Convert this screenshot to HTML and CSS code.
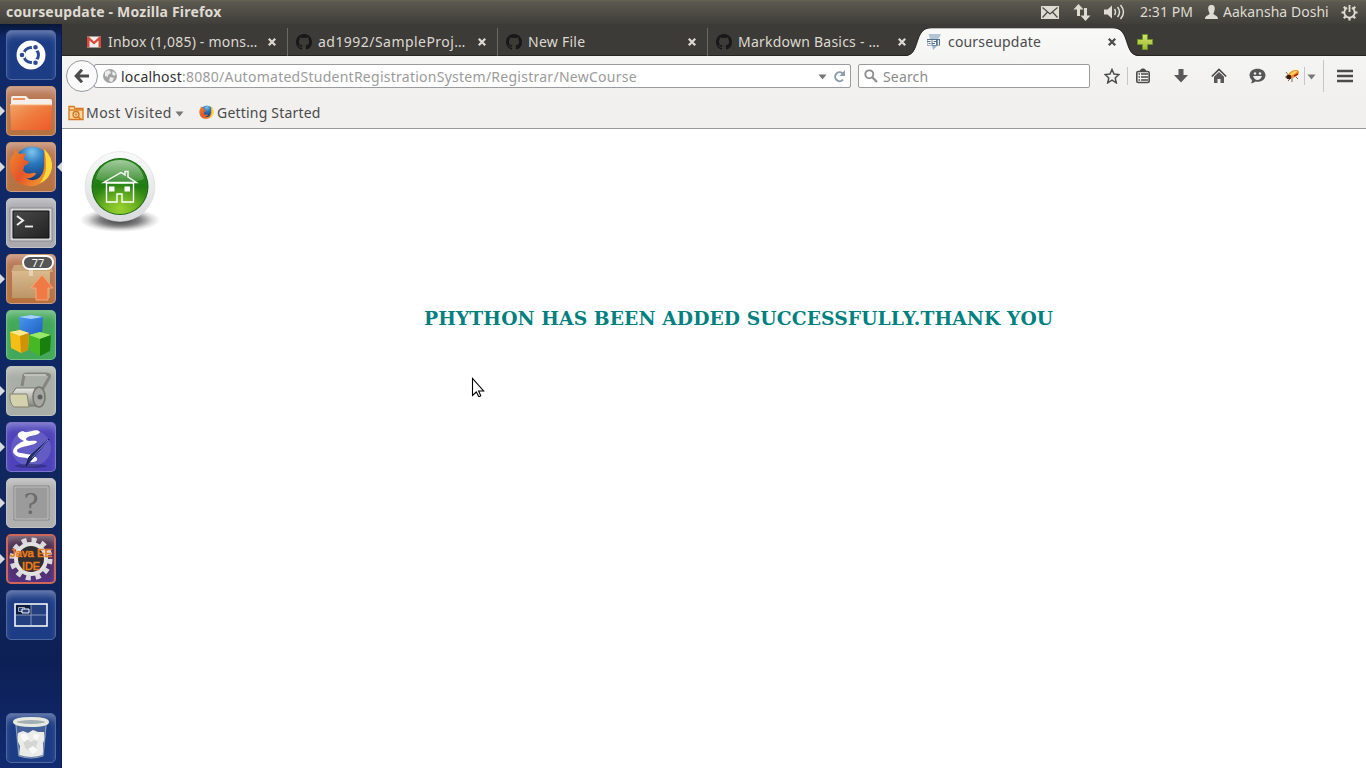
FILE: index.html
```
<!DOCTYPE html>
<html lang="en">
<head>
<meta charset="utf-8">
<title>courseupdate - Mozilla Firefox</title>
<link rel="stylesheet" href="styles.css">
</head>
<body>
<svg class="defs" width="0" height="0">
  <defs>
    <linearGradient id="folder" x1="0" y1="0" x2="1" y2="1"><stop offset="0" stop-color="#f0a468"/><stop offset=".5" stop-color="#ee7a3c"/><stop offset="1" stop-color="#ee5a2a"/></linearGradient>
    <radialGradient id="globe" cx=".5" cy=".15" r=".8"><stop offset="0" stop-color="#7cc4ee"/><stop offset=".4" stop-color="#2a78bd"/><stop offset="1" stop-color="#103572"/></radialGradient>
    <linearGradient id="fox" x1="0" y1="0" x2="1" y2=".6"><stop offset="0" stop-color="#f38a2c"/><stop offset=".5" stop-color="#e4552a"/><stop offset="1" stop-color="#f39a2c"/></linearGradient>
    <linearGradient id="box" x1="0" y1="0" x2="0" y2="1"><stop offset="0" stop-color="#d9ba8e"/><stop offset="1" stop-color="#bb9666"/></linearGradient>
    <linearGradient id="screen" x1="0" y1="0" x2="1" y2="1"><stop offset="0" stop-color="#4a4a4a"/><stop offset="1" stop-color="#222"/></linearGradient>
    <linearGradient id="metal" x1="0" y1="0" x2="0" y2="1"><stop offset="0" stop-color="#e8e9e4"/><stop offset="1" stop-color="#85877e"/></linearGradient>
    <linearGradient id="blueface" x1="0" y1="0" x2="1" y2="1"><stop offset="0" stop-color="#4a9af0"/><stop offset="1" stop-color="#1a5cc0"/></linearGradient>
    <linearGradient id="orb" x1="0" y1="0" x2="0" y2="1"><stop offset="0" stop-color="#2d8a22"/><stop offset=".5" stop-color="#1f7d12"/><stop offset="1" stop-color="#5fa81e"/></linearGradient>
    <radialGradient id="orbglow" cx=".5" cy=".9" r=".5"><stop offset="0" stop-color="#98d02f"/><stop offset="1" stop-color="#98d02f" stop-opacity="0"/></radialGradient>
    <linearGradient id="orbshine" x1="0" y1="0" x2="0" y2="1"><stop offset="0" stop-color="#fff" stop-opacity=".55"/><stop offset="1" stop-color="#fff" stop-opacity=".12"/></linearGradient>
    <linearGradient id="ring" x1="0" y1="0" x2="0" y2="1"><stop offset="0" stop-color="#fafafb"/><stop offset="1" stop-color="#d9dadd"/></linearGradient>
    <radialGradient id="shade"><stop offset="0" stop-color="#000" stop-opacity=".8"/><stop offset=".5" stop-color="#000" stop-opacity=".5"/><stop offset=".8" stop-color="#000" stop-opacity=".14"/><stop offset="1" stop-color="#000" stop-opacity="0"/></radialGradient>
    <linearGradient id="tabfill" x1="0" y1="0" x2="0" y2="1"><stop offset="0" stop-color="#f9f9f8"/><stop offset="1" stop-color="#f5f5f4"/></linearGradient>
    <linearGradient id="plus" x1="0" y1="0" x2="0" y2="1"><stop offset="0" stop-color="#d3e46d"/><stop offset="1" stop-color="#9dbb2c"/></linearGradient>
    <symbol id="github" viewBox="0 0 16 16"><path fill="#191717" d="M8 0C3.58 0 0 3.58 0 8c0 3.54 2.29 6.53 5.47 7.59.4.07.55-.17.55-.38 0-.19-.01-.82-.01-1.49-2.01.37-2.53-.49-2.69-.94-.09-.23-.48-.94-.82-1.13-.28-.15-.68-.52-.01-.53.63-.01 1.08.58 1.23.82.72 1.21 1.87.87 2.33.66.07-.52.28-.87.51-1.07-1.78-.2-3.64-.89-3.64-3.95 0-.87.31-1.59.82-2.15-.08-.2-.36-1.02.08-2.12 0 0 .67-.21 2.2.82.64-.18 1.32-.27 2-.27s1.36.09 2 .27c1.53-1.04 2.2-.82 2.2-.82.44 1.1.16 1.92.08 2.12.51.56.82 1.27.82 2.15 0 3.07-1.87 3.75-3.65 3.95.29.25.54.73.54 1.48 0 1.07-.01 1.93-.01 2.2 0 .21.15.46.55.38A8.01 8.01 0 0 0 16 8c0-4.42-3.58-8-8-8z"/></symbol>
    <symbol id="close" viewBox="0 0 10 10"><path d="M1.800 1.800 8.200 8.200M8.200 1.800 1.800 8.200" stroke="currentColor" stroke-width="2.300"/></symbol>
    <symbol id="firefox" viewBox="0 0 44 44">
      <circle cx="23" cy="20" r="18.500" fill="url(#globe)"/>
      <path d="M35 5q4 4 5 9l2 2q2 14-8 21-12 8-24 1Q0 31 1 18q0-5 4-9 0-3 1-5 2 4 5 5 3-1 6 0-2 3-2 5 1 2 5 2-1 4-5 5 0 3-1 4 3 5 9 3 4-1 4 1-4 5-10 4 8 5 14-1 5-6 4-15z" fill="url(#fox)"/>
      <path d="M35 4q9 8 8 19-2 11-12 15 6-8 6-16 0-10-2-18z" fill="#fbd93a"/>
    </symbol>
  </defs>
</svg>

<header class="panel">
  <span class="panel-title">courseupdate - Mozilla Firefox</span>
  <div class="indicators">
    <svg class="i-mail" width="18" height="13" viewBox="0 0 18 13"><path d="M0 0h18v13H0z" fill="#dfdbd2"/><path d="M1.500 1.500 9 8l7.500-6.500M1.500 11.500 6.500 6M16.500 11.500l-5-5.500" fill="none" stroke="#4b4a45" stroke-width="1.200"/></svg>
    <svg class="i-net" width="18" height="17" viewBox="0 0 18 17"><path d="M5.500 0 10.500 5.500H7V12H4V5.500H.500zM12.500 17 7.500 11.500H11V4h3v7.500h3.500z" fill="#dfdbd2"/></svg>
    <svg class="i-vol" width="21" height="16" viewBox="0 0 21 16"><path d="M0 5.500h3.500L8 1.500v13L3.500 10.500H0z" fill="#dfdbd2"/><path d="M10.500 5q2 3 0 6M13.500 3q4 5 0 10M16.500 1q6 7 0 14" fill="none" stroke="#dfdbd2" stroke-width="1.500"/></svg>
    <span class="clock">2:31 PM</span>
    <svg class="i-user" width="13" height="14" viewBox="0 0 13 14"><path d="M6.500 0C9.300 0 10 2 9.700 4.500 9.400 7 8.400 7.600 8.400 8.800c0 1.400 4.600 1.400 4.600 5.200H0c0-3.800 4.600-3.800 4.600-5.200C4.600 7.600 3.600 7 3.300 4.500 3 2 3.700 0 6.500 0z" fill="#dfdbd2"/></svg>
    <span class="user">Aakansha Doshi</span>
    <svg class="i-gear" width="17" height="17" viewBox="0 0 17 17" fill="none" stroke="#dfdbd2"><path d="M6.200 3.700a5.200 5.200 0 1 0 4.600 0" stroke-width="1.800"/><path d="M8.500 1v7" stroke-width="1.800"/><path d="M8.500 14v2.500M.500 8.500H3M14 8.500h2.500M2.800 2.800l1.800 1.800M14.200 2.800l-1.800 1.800M2.800 14.200l1.800-1.800M14.200 14.200l-1.800-1.800" stroke-width="2.200"/></svg>
  </div>
</header>

<div class="desktop">
  <nav class="launcher">
    <div class="tile tile-dash"><svg viewBox="0 0 50 50"><circle cx="25" cy="25" r="14.500" fill="#fff"/><circle cx="25" cy="25" r="7.500" fill="none" stroke="#2b4a92" stroke-width="3"/><g fill="#2b4a92" stroke="#fff" stroke-width="1.400"><circle cx="16" cy="25" r="3"/><circle cx="29.500" cy="17.200" r="3"/><circle cx="29.500" cy="32.800" r="3"/></g></svg></div>
    <div class="tile tile-brown running"><svg viewBox="0 0 50 50"><path d="M5 12q0-2 2-2h13l3 3h21q2 0 2 2v6H5z" fill="#f5efec"/><path d="M7 12h12v2H7z" fill="#f0905a"/><path d="M4 18h42l-1 26H5z" fill="url(#folder)"/><path d="M4 18h42v1.200H4z" fill="#ffd0ad"/></svg></div>
    <div class="tile tile-brown running focused"><svg viewBox="0 0 50 50"><use href="#firefox" x="3" y="3" width="44" height="44"/></svg></div>
    <div class="tile tile-grey"><svg viewBox="0 0 50 50"><path d="M4 10h42v33H4z" fill="#d5d5d7" stroke="#8a8a8e"/><path d="M7 13h36v27H7z" fill="url(#screen)" stroke="#111"/><path d="m11 18 6 4.500-6 4.500" fill="none" stroke="#eee" stroke-width="2"/><path d="M19 28.500h8" stroke="#eee" stroke-width="1.800"/></svg></div>
    <div class="tile tile-brown running"><svg viewBox="0 0 50 50"><path d="m8 11 37-1 2 8H5z" fill="#c7a577"/><path d="M6 17h38v27H6z" fill="url(#box)"/><path d="M23 14h4v8h-4z" fill="#ead9bd" opacity=".8"/><path d="m36 21 11 13h-5v12H30V34h-5z" fill="#ef7a45" stroke="#f9a57c"/></svg><span class="badge">77</span></div>
    <div class="tile tile-green"><svg viewBox="0 0 50 50"><path d="m13 7 12-2 12 2-1 17-11 3-11-3z" fill="url(#blueface)"/><path d="m13 7 12-2 12 2-12 2z" fill="#a5d2fb"/><path d="m4 22 10-2 9 3-1 17-7 3-10-5z" fill="#f5bd16"/><path d="m4 22 10-2 9 3-9 3z" fill="#fde98b"/><path d="m14 26 9-3-1 17-7 3z" fill="#cf930a"/><path d="m23 25 11-3 11 3-1 16-10 5-11-6z" fill="#45b824"/><path d="m23 25 11-3 11 3-11 4z" fill="#9ae868"/><path d="m34 29 11-4-1 16-10 5z" fill="#198010"/></svg></div>
    <div class="tile tile-stone running"><svg viewBox="0 0 50 50"><path d="M16 20 18 9q1-1 4-1h18q5 0 3 4l-7 12" fill="none" stroke="#85877f" stroke-width="3"/><path d="M18 9h22" stroke="#cfd0ca" stroke-width="1.500"/><path d="M10 22h24v18H8q-6-9 2-18z" fill="url(#metal)" stroke="#73756c"/><path d="M4 28h17l2 13H8q-5-4-4-13z" fill="#d4d2ac" stroke="#828271"/><ellipse cx="33" cy="31" rx="6" ry="10" fill="#a6a7a2" stroke="#73756c" stroke-width="1.500"/><circle cx="34" cy="31" r="2.500" fill="#5e605b"/></svg></div>
    <div class="tile tile-purple running"><svg viewBox="0 0 50 50"><ellipse cx="25" cy="26" rx="20" ry="18.500" fill="#8d8dd8" opacity=".35"/><ellipse cx="25" cy="44" rx="16" ry="2" fill="#23235f" opacity=".5"/><path d="M17 9c4 4 13-4 17 1-1 4-13 3-14 7 0 4 10 0 11 3-2 4-20 4-20 9 0 3 12 2 17 5 6 3 3 7-5 6 7-4-5-4-10-5-13-5-1-14 5-16-10-5-6-9-1-10z" fill="#fff"/><path d="M43 17 27 36l-7 8 3-9z" fill="#24306f" stroke="#131a48"/><path d="m42 18-16 18" stroke="#6e83cf"/></svg></div>
    <div class="tile tile-grey tile-unknown running"><svg viewBox="0 0 50 50"><path d="M8 8h35v34H8z" fill="#9b9b9b" stroke="#858585"/><path d="M9 9h33v32H9z" fill="none" stroke="#bdbdbd"/><text x="25" y="36" class="question">?</text></svg></div>
    <div class="tile tile-java running"><svg viewBox="0 0 50 50"><circle cx="25" cy="25" r="19" fill="none" stroke="#d9d9d9" stroke-width="5" stroke-dasharray="5 4.950"/><circle cx="25" cy="25" r="15" fill="#322d30" stroke="#e1e1e1" stroke-width="4"/><text x="25" y="22.500" textLength="42" lengthAdjust="spacingAndGlyphs" class="java">Java EE</text><text x="25" y="35.500" textLength="18" lengthAdjust="spacingAndGlyphs" class="java">IDE</text></svg></div>
    <div class="tile tile-blue"><svg viewBox="0 0 50 50"><path d="M9 14h32v22H9z" fill="#24407f" stroke="#fff" stroke-width="1.500"/><path d="M10 15h15v10H10z" fill="#0b193f"/><path d="M25 15v20M10 25h30" stroke="#8898bd"/><path d="M12.500 17.500h6v4h-6z" fill="#24407f" stroke="#aaa"/><path d="M16 19h7v4h-7z" fill="#24407f" stroke="#fff"/></svg></div>
    <div class="tile tile-blue tile-trash"><svg viewBox="0 0 50 50"><path d="m9 9 3 34q13 5 26 0l3-34z" fill="#a5bad0" opacity=".3"/><path d="m12 20 5-2 5 2 5-3 5 2 6 0 1 7-2 4 0 12q-12 4-24 0l1-9-3-6z" fill="#ebebea"/><path d="m17 27 4-2 3 4 5-2 3 2-2 4 1 4-4-2-4 3-4-3z" fill="#d5d6d4"/><path d="m15 21 5 0 3 5-5 3-3-4zM28 21l6 1-3 5-4-2zM22 36l5-3 5 4-5 4z" fill="#f9f9f9"/><path d="m10 12 3 31q12 4 24 0l3-31" fill="none" stroke="#8d9fb5"/><ellipse cx="25" cy="9" rx="16.500" ry="3.500" fill="#a3aeb5" stroke="#e7ebdf" stroke-width="3"/></svg></div>
  </nav>

  <div class="browser">
    <div class="tabs">
      <div class="tab"><svg class="favicon" viewBox="0 0 16 16"><path d="M1 2.500h14v11H1z" fill="#f3eeee"/><path d="M1 13.500v-11h1.500L8 7.500l5.500-5H15v11h-2.500V6.500L8 10.500l-4.500-4v7z" fill="#d54b3d"/></svg><span class="label l-inbox">Inbox (1,085) - mons…</span><svg class="close"><use href="#close"/></svg></div>
      <div class="tab"><svg class="favicon"><use href="#github"/></svg><span class="label l-sample">ad1992/SampleProj…</span><svg class="close"><use href="#close"/></svg></div>
      <div class="tab"><svg class="favicon"><use href="#github"/></svg><span class="label l-newfile">New File</span><svg class="close"><use href="#close"/></svg></div>
      <div class="tab tab-last"><svg class="favicon"><use href="#github"/></svg><span class="label l-markdown">Markdown Basics - …</span><svg class="close"><use href="#close"/></svg></div>
      <div class="tab tab-active">
        <svg class="tab-shape" viewBox="0 0 234 29"><path d="M0 29V28C16 28 8 0 26 0H208C226 0 218 28 234 28V29z" fill="url(#tabfill)"/><path d="M0 27.500C16 27.500 8-.2 26-.2H208C226-.2 218 27.500 234 27.500" fill="none" stroke="#262521"/></svg>
        <svg class="favicon" viewBox="0 0 16 16"><path d="M2.500 0h12v2L12 5H4z" fill="#b5c4d3"/><path d="M6 11h6l-5 5z" fill="#a1b4c7"/><path d="M1 5h13v6.500H1z" fill="#54718e"/><path d="M1.500 6.500H5v4H2v-2h3M10 6.500H7v2h2.500v2H6.500M12.300 6v5" fill="none" stroke="#fff" stroke-width="1.100"/></svg>
        <span class="label l-course">courseupdate</span><svg class="close"><use href="#close"/></svg>
      </div>
      <svg class="new-tab" viewBox="0 0 16 16"><path d="M5.500.500h5v5h5v5h-5v5h-5v-5h-5v-5h5z" fill="url(#plus)" stroke="#6c9428"/></svg>
    </div>

    <div class="toolbar">
      <div class="back"><svg viewBox="0 0 16 16"><path d="M8 1.800 2.200 8 8 14.200M2.500 8H15" fill="none" stroke="#4b4b4b" stroke-width="3"/></svg></div>
      <div class="urlbar">
        <svg class="site" viewBox="0 0 16 16"><circle cx="8" cy="8" r="7" fill="#a4a4a4"/><path d="M3 4q3-3 5-1l1 2-3 2 0 2-3-1zM8 9l4 1-2 4-3-1zM11 3l3 3-2 2-2-2z" fill="#ececec"/></svg>
        <span class="url"><span class="host">localhost</span>:8080/AutomatedStudentRegistrationSystem/Registrar/NewCourse</span>
        <svg class="url-drop" viewBox="0 0 9 6"><path d="M.5.500h8L4.500 5.500z" fill="#777"/></svg>
        <svg class="reload" viewBox="0 0 13 13"><path d="M10 9.700A4.500 4.500 0 1 1 9.500 3.200" fill="none" stroke="#8d9cad" stroke-width="2"/><path d="M12 0v6H6.500z" fill="#8d9cad"/></svg>
      </div>
      <div class="search">
        <svg viewBox="0 0 14 14" fill="none" stroke="#8b8b8b"><circle cx="5.300" cy="5.300" r="4" stroke-width="1.800"/><path d="m8.500 8.500 4.500 4.500" stroke-width="2.200"/></svg>
        <span class="placeholder">Search</span>
      </div>
      <div class="tools">
        <svg class="t-star" width="16" height="16" viewBox="0 0 16 16"><path d="m8 1.500 2 4.600 4.900.5-3.700 3.300 1.100 4.900L8 12.200l-4.300 2.600 1.100-4.900L1.100 6.600 6 6.100z" fill="none" stroke="#4b4b4b" stroke-width="1.500"/></svg>
        <span class="rule"></span>
        <svg class="t-list" width="16" height="16" viewBox="0 0 16 16"><path d="M5 3.500V2l2-1.500h2L11 2v1.500z" fill="#4b4b4b"/><rect x="1.800" y="3.500" width="12.400" height="11" rx="1.500" fill="none" stroke="#4b4b4b" stroke-width="1.600"/><path d="M3.500 6h1.500M6 6h7M3.500 9h1.500M6 9h7M3.500 12h1.500M6 12h7" stroke="#4b4b4b" stroke-width="1.400"/></svg>
        <svg class="t-down" width="16" height="16" viewBox="0 0 16 16"><path d="M5.500 1h5v6H15l-7 7.500L1 7h4.500z" fill="#595959"/></svg>
        <svg class="t-home" width="16" height="16" viewBox="0 0 16 16"><path d="m.800 8.500 7.200-7 7.200 7" fill="none" stroke="#4b4b4b" stroke-width="1.700"/><path d="m3 8.800 5-4.700 5 4.700V15H9.500v-4h-3v4H3z" fill="#595959"/></svg>
        <svg class="t-chat" width="17" height="16" viewBox="0 0 17 16"><path d="M8.500.8c4.500 0 8 2.700 8 6.500s-3.500 6.500-8 6.500q-1 0-2-.2-2 1.700-4.700 1.600 1.200-1.200 1.200-3Q.5 10 .5 7.300C.5 3.500 4 .8 8.500.8z" fill="#565656"/><circle cx="6" cy="5.500" r="1.200" fill="#eee"/><circle cx="11" cy="5.500" r="1.200" fill="#eee"/><path d="M4 8h9q-1.500 4-4.500 4T4 8z" fill="#eee"/></svg>
        <svg class="t-bug" width="16" height="16" viewBox="0 0 16 16"><path d="m2 4 4 5M1 9l5 0M4 13l3-3M8 14l0-4M12 9l2 2" stroke="#5c4630" stroke-width=".8"/><ellipse cx="9.500" cy="6" rx="5.800" ry="3.300" transform="rotate(-28 9.500 6)" fill="#e88a1c"/><ellipse cx="9.500" cy="5" rx="4" ry="1.300" transform="rotate(-28 9.500 5)" fill="#fbd062"/><ellipse cx="4.800" cy="9" rx="2.600" ry="2.200" fill="#3d1b0a"/><path d="m10 8 4-2" stroke="#b32a12" stroke-width="1.500"/></svg>
        <span class="rule rule-bug"></span>
        <svg class="t-drop" width="9" height="6" viewBox="0 0 9 6"><path d="M.5.500h8L4.500 5.500z" fill="#777"/></svg>
        <span class="rule rule-tall"></span>
        <svg class="t-menu" width="16" height="14" viewBox="0 0 16 14"><path d="M0 2h16M0 7h16M0 12h16" stroke="#4b4b4b" stroke-width="2.600"/></svg>
      </div>
    </div>

    <div class="bookmarks">
      <svg class="bm-folder" viewBox="0 0 16 16" fill="none" stroke="#d6751b"><path d="M1 14.500V1.500h5l1 2h8v11z" fill="#fbd7a4" stroke-width="1.300"/><path d="M1 5h14" stroke-width="1.300"/><circle cx="8" cy="9.500" r="3" stroke-width="1.300"/><path d="m10 11.500 2.500 2.500" stroke-width="1.500"/><circle cx="8" cy="9.500" r=".8"/></svg>
      <span class="label l-most">Most Visited</span>
      <svg class="bm-drop" viewBox="0 0 9 6"><path d="M.5.500h8L4.500 5.500z" fill="#777"/></svg>
      <svg class="bm-fox"><use href="#firefox"/></svg>
      <span class="label l-getting">Getting Started</span>
    </div>

    <main class="page">
      <svg class="home" width="80" height="84" viewBox="0 0 80 84">
        <ellipse cx="40" cy="70" rx="40" ry="12" fill="url(#shade)"/>
        <circle cx="40" cy="36.500" r="35" fill="url(#ring)" stroke="#dcdcdf" stroke-width=".6"/>
        <circle cx="40" cy="36.500" r="28.500" fill="#17690f"/>
        <circle cx="40" cy="36.500" r="27.500" fill="url(#orb)"/>
        <circle cx="40" cy="36.500" r="27.500" fill="url(#orbglow)"/>
        <path d="M16 29C18 17 28 10 40 10S62 17 64 29Q52 34 40 34T16 29z" fill="url(#orbshine)"/>
        <g fill="none" stroke="#fff" stroke-width="1.400"><path d="M23.500 32.500 41 22.500l4 2.500v-3.500h3V27l8.500 5.500zM26.500 33v19H37v-8h5v8h11.500V33z"/></g>
        <path d="M29 36.500h5.500v5H29zM44.500 36.500H50v5h-5.500z" fill="#fff"/>
      </svg>
      <h3 class="message">PHYTHON HAS BEEN ADDED SUCCESSFULLY.THANK YOU</h3>
      <svg class="cursor" width="14" height="22" viewBox="0 0 14 22"><path d="M1.500 1.500v17l3.800-3.500 2.400 4.500q1.500.3 2-1L7.600 14h5z" fill="#fff" stroke="#000" stroke-width="1.100"/></svg>
    </main>
  </div>
</div>
</body>
</html>
```
FILE: styles.css
```
* { box-sizing: border-box; }
body {
  margin: 0;
  width: 1366px;
  height: 768px;
  overflow: hidden;
  display: flex;
  flex-direction: column;
  font: 14px/20px "Noto Sans", "Open Sans", sans-serif;
  color: #3c3c3c;
}
svg { display: block; flex: none; }
.defs { position: absolute; }
span { white-space: nowrap; }

.panel {
  flex: none;
  height: 24px;
  display: flex;
  align-items: center;
  justify-content: space-between;
  padding: 0 8px 0 6px;
  background: linear-gradient(#686454 0, #5b5850 2px, #3f3e39 100%);
  color: #dfdbd2;
}
.panel-title { font-weight: bold; letter-spacing: 0.2px; }
.indicators { display: flex; align-items: center; }
.i-net { margin-left: 14px; }
.i-vol { margin-left: 13px; }
.clock { margin-left: 15px; width: 53px; letter-spacing: 0.05px; }
.i-user { margin-left: 12px; }
.user { margin-left: 5px; width: 106px; letter-spacing: 0.03px; }
.i-gear { margin-left: 12px; }

.desktop { flex: 1; display: flex; min-height: 0; }
.launcher {
  flex: none;
  width: 62px;
  padding: 6px 6px 5px;
  display: flex;
  flex-direction: column;
  gap: 6px;
  background: linear-gradient(#071737, #10296a 14px, #0f2762 45%, #11275c 68%, #0d2056 86%, #112a70);
  border-right: 1px solid #0b1c49;
}
.tile {
  position: relative;
  width: 50px;
  height: 50px;
  flex: none;
  border-radius: 5px;
  border: 1px solid rgba(255, 255, 255, .28);
  box-shadow: inset 0 7px 9px -4px rgba(255, 255, 255, .4);
}
.tile > svg { width: 50px; height: 50px; margin: -1px; }
.tile-dash, .tile-blue { background: #1c3c85; border-color: #4e679f; }
.tile-brown { background: linear-gradient(#ba7a5a, #b6713e); }
.tile-grey { background: #a9a9ae; border-color: #c3c3c7; }
.tile-unknown { background: #b0b0b0; }
.tile-green { background: #43a85a; }
.tile-stone { background: #a9afa6; }
.tile-purple { background: #4d42ba; }
.tile-java { background: linear-gradient(#4a2d45, #553080); border: 2px solid #cf6657; }
.tile-java > svg { margin: -2px; }
.tile-trash { margin-top: auto; }
.running::before, .focused::after {
  content: "";
  position: absolute;
  top: 19px;
  border: 5px solid transparent;
}
.running::before { left: -7px; border-left-color: #d7d9dd; border-right: 0; }
.focused::after { right: -7px; border-right-color: #d7d9dd; border-left: 0; }
.tile-java::before { top: 18px; left: -8px; }
.badge {
  position: absolute;
  top: 0;
  left: 15px;
  width: 32px;
  height: 15px;
  border: 2px solid #fff;
  border-radius: 8px;
  background: #555;
  color: #fff;
  font-size: 11px;
  line-height: 11px;
  text-align: center;
}
.question { font: 28px "DejaVu Serif", serif; fill: #6b6b6b; text-anchor: middle; }
.java { font: 11px "Liberation Sans", sans-serif; fill: #f38a1e; stroke: #e8791a; stroke-width: .6px; text-anchor: middle; }

.browser { flex: 1; min-width: 0; display: flex; flex-direction: column; background: #fff; }
.tabs {
  flex: none;
  height: 32px;
  padding: 4px 0 0 16px;
  display: flex;
  background: #3c3b37;
  border-bottom: 1px solid #262521;
}
.tab {
  position: relative;
  flex: none;
  width: 210px;
  height: 28px;
  padding: 0 10px 0 8px;
  display: flex;
  align-items: center;
  gap: 6px;
  color: #dcd9d2;
  border-right: 1px solid #6a6963;
}
.tab-last, .tab-active { border-right: 0; padding-right: 11px; }
.tab-active { color: #4c4c4c; }
.tab-active > * { position: relative; }
.tab-active .tab-shape { position: absolute; left: -13px; top: 0; width: 234px; height: 29px; }
.l-inbox { letter-spacing: 0.2px; }
.l-sample { letter-spacing: 0.46px; }
.l-newfile { letter-spacing: 0.25px; }
.l-markdown { letter-spacing: 0.23px; }
.l-course { letter-spacing: 0.17px; }
.favicon { width: 16px; height: 16px; }
.close { width: 10px; height: 10px; margin-left: auto; }
.new-tab { width: 16px; height: 16px; margin: 6px 0 0 9px; position: relative; }

.toolbar {
  flex: none;
  height: 40px;
  padding-left: 4px;
  display: flex;
  align-items: center;
  background: linear-gradient(#f5f5f4, #f1f0ef);
}
.back {
  position: relative;
  z-index: 1;
  flex: none;
  width: 32px;
  height: 32px;
  border: 1px solid #9499a2;
  border-radius: 50%;
  background: #fafafa;
  display: grid;
  place-items: center;
}
.back svg { width: 16px; height: 16px; }
.urlbar, .search {
  flex: none;
  height: 24px;
  border: 1px solid #9a9b9e;
  border-radius: 2px;
  background: #fff;
  display: flex;
  align-items: center;
}
.urlbar { width: 757px; margin-left: -4px; padding: 0 4px 0 7px; }
.site { width: 16px; height: 16px; }
.url { margin-left: 3px; padding-top: 2px; color: #9b9b9b; letter-spacing: 0.26px; }
.host { color: #303030; letter-spacing: 0.2px; }
.url-drop { width: 9px; height: 6px; margin-left: auto; margin-top: 2px; }
.reload { width: 13px; height: 13px; margin-left: 6px; }
.search { width: 232px; margin-left: 7px; padding-left: 5px; color: #8b8b8b; }
.search svg { width: 14px; height: 14px; margin-right: 5px; }
.placeholder { padding-top: 2px; letter-spacing: 0.15px; }
.tools { display: flex; align-items: center; margin-left: 14px; }
.rule { width: 1px; height: 18px; background: #c3c6cc; margin-left: 7px; }
.t-list { margin-left: 7px; }
.t-down { margin-left: 22px; }
.t-home { margin-left: 22px; }
.t-chat { margin-left: 22px; }
.t-bug { margin-left: 18px; }
.rule-bug { margin-left: 4px; }
.t-drop { margin-left: 2px; margin-top: 2px; }
.rule-tall { height: 32px; margin-left: 7px; }
.t-menu { margin-left: 13px; }

.bookmarks {
  flex: none;
  height: 33px;
  padding: 1px 0 0 6px;
  display: flex;
  align-items: center;
  background: #f1f0ef;
  border-bottom: 1px solid #999;
  color: #4a4a4a;
}
.bookmarks .label { padding-top: 1px; }
.bm-folder { width: 16px; height: 16px; margin-right: 2px; }
.l-most { width: 89px; letter-spacing: 0.45px; }
.bm-drop { width: 9px; height: 6px; margin-top: 2px; }
.bm-fox { width: 15px; height: 15px; margin: 0 3px 0 15px; }
.l-getting { letter-spacing: 0.2px; }

.page { flex: 1; position: relative; }
.home { margin: 21px 0 0 18px; }
.message {
  margin: 73px 0 0 362px;
  font: bold 18.72px/22px "DejaVu Serif", serif;
  letter-spacing: 0.09px;
  color: #008080;
  white-space: nowrap;
}
.cursor { position: absolute; left: 409px; top: 248px; }
```
